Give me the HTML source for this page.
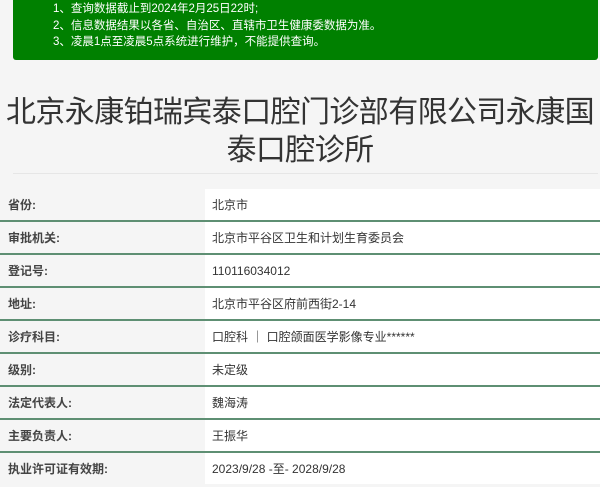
<!DOCTYPE html><html><head><meta charset="utf-8"><style>
body{margin:0;width:600px;height:487px;background:#f5f5f5;font-family:"Liberation Sans","Noto Sans CJK SC",sans-serif;overflow:hidden;position:relative}
.g{position:absolute;left:13px;top:0;width:585px;height:60px;background:#008000;border-radius:0 0 3px 3px;color:#fff;font-size:11.5px;line-height:16.5px;padding-top:1px;box-sizing:border-box}
.g div{padding-left:40px}
h1{position:absolute;top:94px;left:0;width:600px;margin:0;text-align:center;font-weight:normal;font-size:30px;line-height:38px;color:#333;white-space:nowrap;letter-spacing:-0.6px}
.sep{position:absolute;left:13px;top:173px;width:585px;height:1px;background:#e6e6e6}
table{position:absolute;left:0;top:189px;width:600px;border-collapse:collapse;font-size:12px;color:#333}
td{height:31px;padding:0;border-bottom:2px solid #5e8f73}
td.l{width:205px;padding-left:8px;box-sizing:border-box;font-weight:bold;color:#444}
td.r{background:#fff;padding-left:7px}
tr:last-child td{border-bottom:none}
</style></head><body>
<div class="g"><div>1、查询数据截止到2024年2月25日22时;</div><div>2、信息数据结果以各省、自治区、直辖市卫生健康委数据为准。</div><div>3、凌晨1点至凌晨5点系统进行维护，不能提供查询。</div></div>
<h1>北京永康铂瑞宾泰口腔门诊部有限公司永康国<br>泰口腔诊所</h1>
<div class="sep"></div>
<table>
<tr><td class="l">省份:</td><td class="r">北京市</td></tr>
<tr><td class="l">审批机关:</td><td class="r">北京市平谷区卫生和计划生育委员会</td></tr>
<tr><td class="l">登记号:</td><td class="r">110116034012</td></tr>
<tr><td class="l">地址:</td><td class="r">北京市平谷区府前西街2-14</td></tr>
<tr><td class="l">诊疗科目:</td><td class="r">口腔科 ｜ 口腔颌面医学影像专业******</td></tr>
<tr><td class="l">级别:</td><td class="r">未定级</td></tr>
<tr><td class="l">法定代表人:</td><td class="r">魏海涛</td></tr>
<tr><td class="l">主要负责人:</td><td class="r">王振华</td></tr>
<tr><td class="l">执业许可证有效期:</td><td class="r">2023/9/28 -至- 2028/9/28</td></tr>
</table>
</body></html>
